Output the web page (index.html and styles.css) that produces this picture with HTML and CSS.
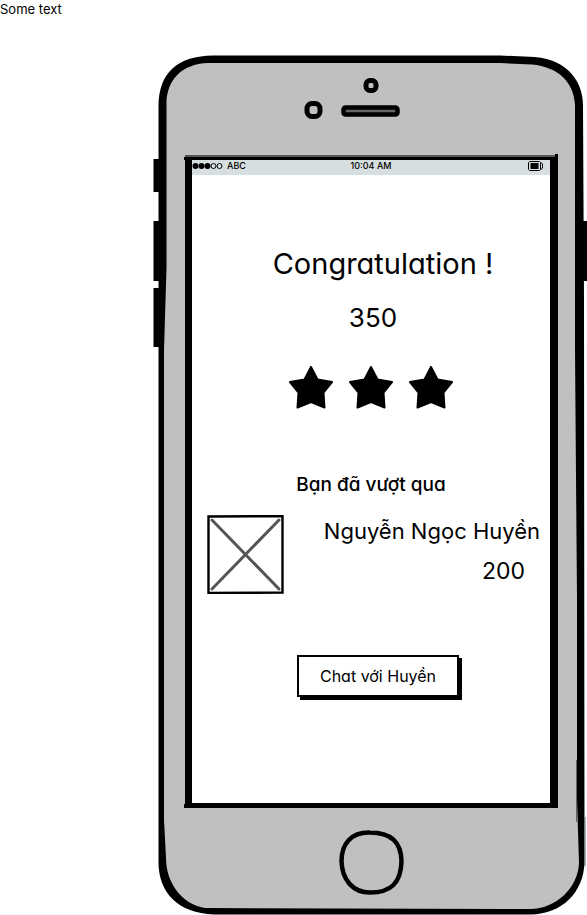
FILE: index.html
```html
<!DOCTYPE html>
<html lang="vi">
<head>
<meta charset="utf-8">
<meta name="viewport" content="width=device-width, initial-scale=1">
<title>Congratulation</title>
<link rel="stylesheet" href="styles.css">
</head>
<body>
<p class="note">Some text</p>
<main class="phone">
  <svg class="phone-case" viewBox="153 55 434 860" preserveAspectRatio="none" aria-hidden="true">
    <path d="M153.500 159h8v33h-8zM153.500 221h8v60h-8zM153.500 288h8v59h-8zM580 221h7v60h-7z"/>
    <path d="M158.500 106C159 72 178 56 213 55.500H500L535 57C568 60 583 82 583 105L584 300L584.500 862C584 892 562 914 531 914.500H214C178 913 158.500 893 158.500 862Z"/>
    <path fill="#c0c0c0" d="M166.500 101C168 80 181 64 208 63H500L532 64.500C558 67 574 82 575 105V350L577 600V800L579 863C578 888 556 909 530 909L205 908C181 904 166 882 166 858L164 820V350L166.500 268Z"/>
    <path fill="#666" d="M576 760h1v62h-1zM584.500 817h1v49h-1z"/>
    <path fill="#555" d="M185 155h373v3h-373z"/>
    <path d="M184 157h374v3h-374zM184 804h4v4h-4zM555 154h3v4h-3z"/>
  </svg>
  <header class="phone-top">
    <svg class="sensors" viewBox="300 74 104 48" aria-hidden="true">
      <rect x="366" y="80.500" width="10" height="10" rx="4" fill="#c0c0c0" stroke="#000" stroke-width="5"/>
      <rect x="307" y="103.500" width="13" height="13" rx="5" fill="#c0c0c0" stroke="#000" stroke-width="5"/>
      <rect x="343.500" y="107.500" width="54" height="7" rx="2" fill="#666" stroke="#000" stroke-width="4.500"/>
    </svg>
  </header>
  <section class="screen">
    <div class="status">
      <span class="carrier">
        <svg class="signal" viewBox="0 0 31 8" aria-hidden="true">
          <circle cx="3.500" cy="4" r="3"/><circle cx="9.500" cy="4" r="3"/><circle cx="15.500" cy="4" r="3"/>
          <g fill="none" stroke="#000"><circle cx="21.500" cy="4" r="2.500"/><circle cx="27.500" cy="4" r="2.500"/></g>
        </svg>
        ABC
      </span>
      <span>10:04 AM</span>
      <svg class="battery" viewBox="0 0 16 10" aria-hidden="true">
        <path d="M1.500 .5H11.500L12.500 1.500V8.500L11.500 9.500H1.500L.5 8.500V1.500ZM12.500 1L14.500 3V7L12.500 9" fill="none" stroke="#000"/>
        <path d="M2.500 2h8v6h-8z"/>
      </svg>
    </div>
    <h1 class="title">Congratulation !</h1>
    <p class="score">350</p>
    <div class="stars" role="img" aria-label="3">
      <svg viewBox="0 0 44 43"><path d="M22 1L28.500 13.500L43 16L34.500 26.500L35.500 41.500L22 36L8.500 41.500L9.500 26.500L1 16L15.500 13.500Z"/></svg>
      <svg viewBox="0 0 44 43"><path d="M22 1L28.500 13.500L43 16L34.500 26.500L35.500 41.500L22 36L8.500 41.500L9.500 26.500L1 16L15.500 13.500Z"/></svg>
      <svg viewBox="0 0 44 43"><path d="M22 1L28.500 13.500L43 16L34.500 26.500L35.500 41.500L22 36L8.500 41.500L9.500 26.500L1 16L15.500 13.500Z"/></svg>
    </div>
    <h2 class="subtitle">Bạn đã vượt qua</h2>
    <div class="rival">
      <svg class="avatar" viewBox="0 0 77 79" aria-hidden="true">
        <path d="M1.500 1.500L75.500 1V77.500L1.500 78Z" fill="#fff" stroke="#000" stroke-width="2.400"/>
        <path d="M5 5L72 74M72 5L5 74" stroke="#555" stroke-width="3" stroke-linecap="round"/>
      </svg>
      <div class="rival-info">
        <p class="rival-name">Nguyễn Ngọc Huyền</p>
        <p class="rival-score">200</p>
      </div>
    </div>
    <button class="chat" type="button">Chat với Huyền</button>
  </section>
  <footer class="phone-bottom">
    <button class="home" type="button" aria-label="Home">
      <svg viewBox="0 0 66 66" aria-hidden="true"><path d="M31 2.500C12 2 2.500 14 2.500 31C3 50 14 62.500 31 62.500C52 62.500 62 53 62.500 31C62 12 52 2.500 31 2.500Z" fill="none" stroke="#000" stroke-width="4.500"/></svg>
    </button>
  </footer>
</main>
</body>
</html>
```
FILE: styles.css
```css
* { box-sizing: border-box; }
body {
  margin: 0;
  background: #fff;
  color: #000;
  font-family: Inter, "Noto Sans", sans-serif;
  font-feature-settings: "cv11";
}
p, h1, h2 { margin: 0; font-weight: 400; }
svg { display: block; }
.note { font-size: 13px; line-height: 18px; }
.phone {
  position: relative;
  margin: 37px 0 0 153px;
  padding: 0 29px 0 32px;
  max-width: 434px;
}
.phone-case {
  position: absolute;
  inset: 0;
  z-index: -1;
  width: 100%;
  height: 100%;
}
.phone-top { padding: 19px 0 38px 115px; }
.sensors { width: 104px; height: 48px; }
.screen {
  display: flex;
  flex-direction: column;
  min-height: 648px;
  border: solid #000;
  border-width: 0 8px 5px 7px;
  background: #fff;
}
.status {
  display: grid;
  grid-template-columns: 1fr auto 1fr;
  align-items: center;
  height: 15px;
  padding-bottom: 4px;
  background: #d7dee0;
  font-size: 9px;
  font-weight: 500;
  line-height: 12px;
}
.carrier { display: flex; align-items: center; gap: 4px; }
.signal { width: 31px; height: 8px; }
.battery { width: 16px; height: 10px; margin-right: 6px; justify-self: end; }
.title {
  margin-top: 69px;
  padding-left: 24px;
  font-size: 29px;
  line-height: 40px;
  text-align: center;
}
.score {
  margin-top: 16px;
  padding-left: 4px;
  font-size: 26px;
  line-height: 36px;
  text-align: center;
}
.stars {
  display: flex;
  justify-content: center;
  gap: 16px;
  margin-top: 30px;
}
.stars svg {
  width: 44px;
  height: 43px;
  stroke: #000;
  stroke-width: 2;
  stroke-linejoin: round;
}
.subtitle {
  margin-top: 62px;
  font-size: 19px;
  font-weight: 500;
  line-height: 28px;
  text-align: center;
}
.rival {
  display: flex;
  justify-content: space-between;
  margin-top: 16px;
  padding: 0 10px 0 15px;
}
.avatar { width: 77px; height: 79px; }
.rival-info { text-align: right; }
.rival-name, .rival-score { line-height: 32px; }
.rival-name { font-size: 22px; }
.rival-score { margin-top: 8px; padding-right: 15px; font-size: 23px; }
.chat {
  align-self: center;
  margin: 61px 0 0 14px;
  padding: 0 21px;
  height: 42px;
  border: 2px solid #000;
  background: #fff;
  box-shadow: 3px 3px 0 #000;
  color: inherit;
  font: inherit;
  font-size: 16px;
}
.phone-bottom {
  display: flex;
  justify-content: center;
  padding: 22px 0 19px;
}
.home {
  width: 66px;
  height: 66px;
  padding: 0;
  border: 0;
  background: none;
}
```
